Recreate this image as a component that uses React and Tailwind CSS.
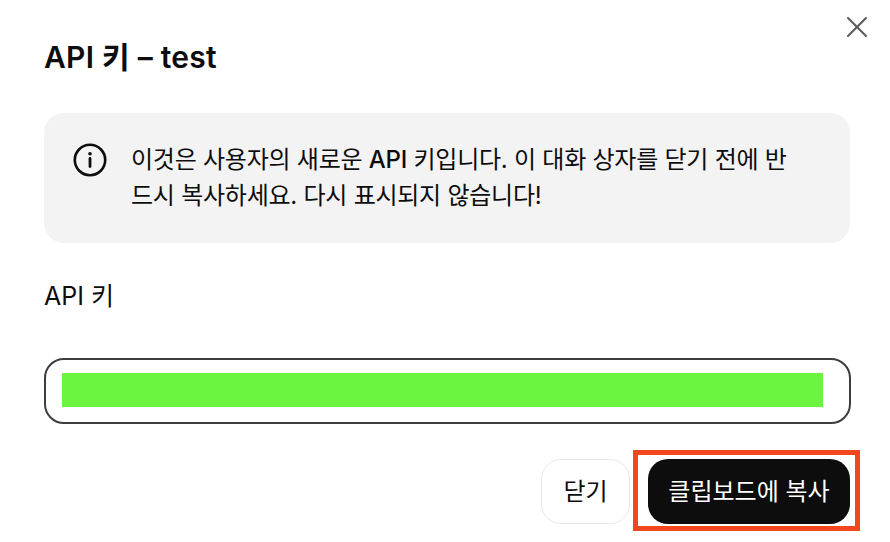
import React from "react";
import { X } from "lucide-react";

const font = { fontFamily: '"Inter", "Noto Sans CJK KR", sans-serif' };

export default function App() {
  return (
    <div style={font} className="relative w-[890px] h-[542px] overflow-hidden bg-white text-[#0d0d0d] pl-11 pr-10 pt-[36px]">
      {/* Close */}
      <button className="absolute top-[9px] right-[15px] text-[#5d5d5d]">
        <X size={36} strokeWidth={1.4} />
      </button>

      <h2 className="text-[30px] leading-[42px] font-semibold tracking-[0.25px]">API 키 – test</h2>

      {/* Notice */}
      <div className="mt-[35px] h-[130px] rounded-[20px] bg-[#f3f3f3] flex gap-[24px] pl-[29px] pr-[28px] pt-[29px]">
        <svg width="34" height="34" viewBox="0 0 34 34" fill="none" className="shrink-0 mt-[1px]">
          <circle cx="17" cy="17" r="15.2" stroke="#0d0d0d" strokeWidth="2.6" />
          <circle cx="17" cy="10.8" r="1.8" fill="#0d0d0d" />
          <path d="M17 15.5V23.5" stroke="#0d0d0d" strokeWidth="2.8" strokeLinecap="round" />
        </svg>
        <p className="text-[24px] leading-[36px] tracking-[-0.25px] break-all w-[672px]">
          이것은 사용자의 새로운 <span className="font-medium">API</span> 키입니다. 이 대화 상자를 닫기 전에 반드시 복사하세요. 다시 표시되지 않습니다!
        </p>
      </div>

      <label className="block mt-[36px] text-[25px] leading-[34px]">API 키</label>

      {/* Key field */}
      <div className="mt-[45px] h-[66px] w-[807px] rounded-[20px] border-2 border-[#3d3d3d] pl-[16px] pt-[13px]">
        <div className="h-[34px] w-[761px] bg-[#6bf53f]"></div>
      </div>

      <div className="mt-[35px] flex justify-end gap-[18px]">
        <button className="h-[65px] w-[89px] rounded-[20px] border border-[#e8e8e8] bg-white text-[24px]">닫기</button>
        <button className="relative h-[65px] w-[202px] rounded-[20px] bg-[#0d0d0d] text-white text-[24px]">
          클립보드에 복사
          <span className="absolute -left-[15px] -right-[10px] -top-[9px] -bottom-[7px] border-[5px] border-[#f1471d]"></span>
        </button>
      </div>
    </div>
  );
}
